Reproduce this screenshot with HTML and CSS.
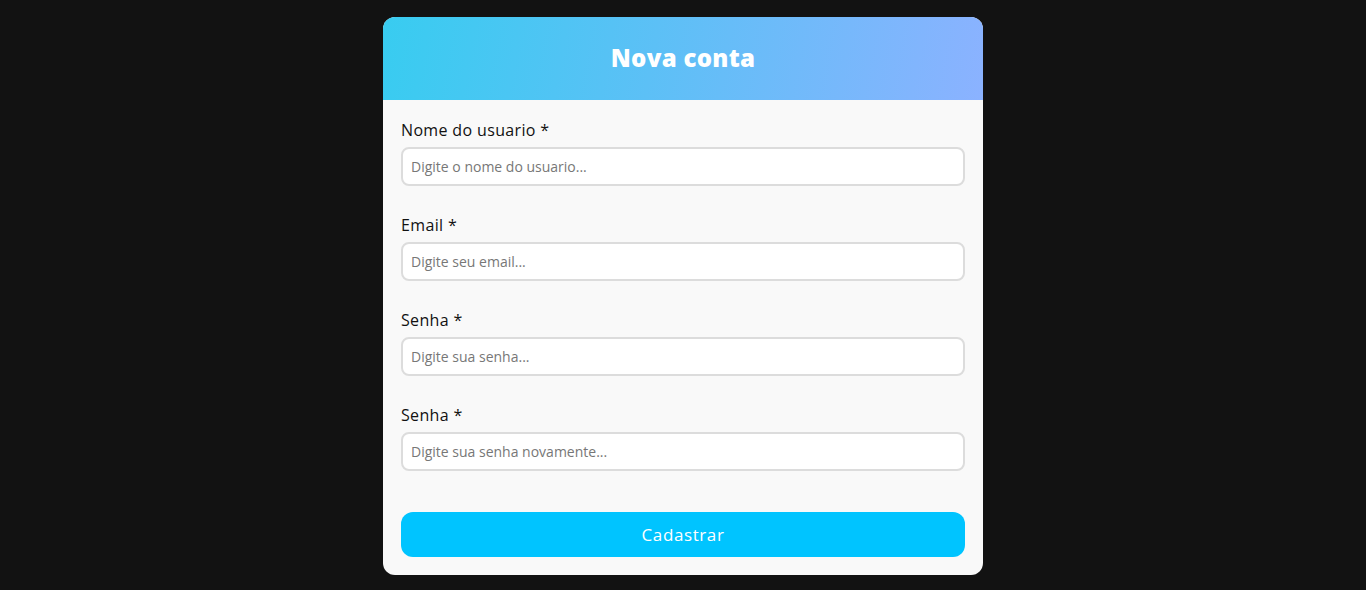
FILE: index.html
```html
<!DOCTYPE html>
<html lang="pt">
<head>
<meta charset="utf-8">
<title>Nova conta</title>
<link rel="stylesheet" href="styles.css">
</head>
<body>
<div class="page">
  <form class="card">
    <div class="card-header"><h1>Nova conta</h1></div>
    <div class="card-body">
      <div class="field">
        <label>Nome do usuario *</label>
        <input type="text" placeholder="Digite o nome do usuario...">
      </div>
      <div class="field">
        <label>Email *</label>
        <input type="text" placeholder="Digite seu email...">
      </div>
      <div class="field">
        <label>Senha *</label>
        <input type="password" placeholder="Digite sua senha...">
      </div>
      <div class="field">
        <label>Senha *</label>
        <input type="password" placeholder="Digite sua senha novamente...">
      </div>
      <button type="button" class="submit">Cadastrar</button>
    </div>
  </form>
</div>
</body>
</html>
```
FILE: styles.css
```css
* { box-sizing: border-box; }
html, body { margin: 0; padding: 0; }
body {
  background: #121212;
  font-family: "Open Sans", "Noto Sans", sans-serif;
  height: 590px;
}
.page {
  display: flex;
  justify-content: center;
  padding-top: 17px;
}
.card {
  width: 600px;
  background: #f9f9f9;
  border-radius: 12px;
  overflow: hidden;
}
.card-header {
  height: 83px;
  display: flex;
  align-items: center;
  justify-content: center;
  background: linear-gradient(100deg, #38ccf0 0%, #5cc0f6 45%, #8bb2ff 100%);
}
.card-header h1 {
  margin: 0;
  color: #fff;
  font-size: 24px;
  font-weight: 800;
  letter-spacing: 0.3px;
  line-height: 30px;
  padding-bottom: 2px;
}
.card-body {
  padding: 18px 18px 18px;
  display: flex;
  flex-direction: column;
}
.field {
  display: flex;
  flex-direction: column;
  gap: 5px;
  margin-bottom: 27px;
}
.field:last-of-type { margin-bottom: 41px; }
.field label {
  font-size: 16px;
  line-height: 24px;
  letter-spacing: 0.35px;
  color: #111;
}
.field input {
  height: 39px;
  border: 2px solid #dcdcdc;
  border-radius: 8px;
  background: #fff;
  padding: 0 8px;
  font-family: inherit;
  font-size: 14px;
  color: #333;
  outline: none;
}
.field input::placeholder { color: #777; }
.submit {
  height: 45px;
  border: none;
  border-radius: 12px;
  background: #00c4ff;
  color: #fff;
  font-family: inherit;
  font-size: 17px;
  letter-spacing: 0.6px;
  padding-bottom: 2px;
  cursor: pointer;
}
```
